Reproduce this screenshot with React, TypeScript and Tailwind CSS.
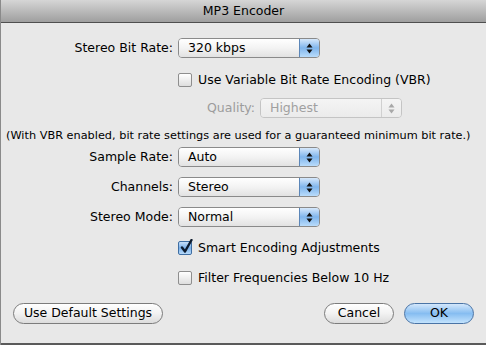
import React from "react";

const font = { fontFamily: '"DejaVu Sans", "Liberation Sans", sans-serif' };

function Arrows({ disabled }: { disabled?: boolean }) {
  const fill = disabled ? "#a8a8a8" : "#111";
  return (
    <svg width="7" height="11" viewBox="0 0 7 11">
      <polygon points="3.5,0.5 6.5,4.5 0.5,4.5" fill={fill} />
      <polygon points="3.5,10.5 6.5,6.5 0.5,6.5" fill={fill} />
    </svg>
  );
}

function Popup({ value, disabled }: { value: string; disabled?: boolean }) {
  return (
    <div
      className={`flex h-[20px] w-[142px] overflow-hidden rounded-[4px] border ${
        disabled ? "border-[#c4c4c4]" : "border-[#8a8a8a]"
      }`}
    >
      <div
        className={`flex flex-1 items-center pl-[9px] text-[12.5px] ${
          disabled
            ? "bg-gradient-to-b from-[#f4f4f4] to-[#ebebeb] text-[#a0a0a0]"
            : "bg-gradient-to-b from-[#ffffff] via-[#f3f3f3] to-[#e2e2e2] text-black"
        }`}
      >
        {value}
      </div>
      <div
        className={`flex w-[20px] items-center justify-center border-l ${
          disabled
            ? "border-[#d0d0d0] bg-gradient-to-b from-[#f4f4f4] to-[#ebebeb]"
            : "border-[#5b86b8] bg-gradient-to-b from-[#d6e8fb] via-[#7fb5ec] to-[#b9dcfb]"
        }`}
      >
        <Arrows disabled={disabled} />
      </div>
    </div>
  );
}

function Check({ checked, label }: { checked?: boolean; label: string }) {
  return (
    <div className="flex h-[20px] items-center pl-[177px]">
      <div
        className={`relative h-[14px] w-[14px] rounded-[2px] border ${
          checked
            ? "border-[#3e6ea3] bg-gradient-to-b from-[#c7dff8] via-[#79b0ea] to-[#b7dafa]"
            : "border-[#8e8e8e] bg-gradient-to-b from-[#ffffff] to-[#dedede]"
        }`}
      >
        {checked && (
          <svg className="absolute left-[1px] top-[-3px]" width="13" height="15" viewBox="0 0 13 15">
            <path d="M2 8.5 L5 12.5 L11.5 1" stroke="#0d1b2e" strokeWidth="2.4" fill="none" strokeLinecap="round" strokeLinejoin="round" />
          </svg>
        )}
      </div>
      <span className="ml-[6px] text-[12.5px] text-black">{label}</span>
    </div>
  );
}

function Row({ label, value, className = "" }: { label: string; value: string; className?: string }) {
  return (
    <div className={`flex h-[20px] items-center ${className}`}>
      <div className="w-[172px] text-right text-[12.5px] text-black">{label}</div>
      <div className="ml-[5px]">
        <Popup value={value} />
      </div>
    </div>
  );
}

function Button({ children, primary, className = "" }: { children: React.ReactNode; primary?: boolean; className?: string }) {
  return (
    <div
      className={`flex h-[21px] items-center justify-center rounded-full border text-[12.5px] text-black ${
        primary
          ? "border-[#4a74a6] bg-gradient-to-b from-[#d3e7fb] via-[#86bdf1] to-[#c3e3fd]"
          : "border-[#7c7c7c] bg-gradient-to-b from-[#ffffff] via-[#f2f2f2] to-[#dcdcdc]"
      } ${className}`}
    >
      {children}
    </div>
  );
}

export default function App() {
  return (
    <div className="flex h-[345px] w-[486px] flex-col overflow-hidden border-l border-[#8a8a8a] bg-[#e8e8e8]" style={font}>
      <div className="flex h-[23px] shrink-0 items-center justify-center border-b border-[#4f4f4f] bg-gradient-to-b from-[#d6d6d6] to-[#9f9f9f] text-[12.5px] text-black">
        MP3 Encoder
      </div>
      <div className="flex flex-1 flex-col border-b-2 border-[#5a5a5a]">
        <Row label="Stereo Bit Rate:" value="320 kbps" className="mt-[15px]" />
        <div className="mt-[12px]">
          <Check label="Use Variable Bit Rate Encoding (VBR)" />
        </div>
        <div className="mt-[8px] flex h-[20px] items-center">
          <div className="w-[254px] text-right text-[12.5px] text-[#9c9c9c]">Quality:</div>
          <div className="ml-[5px]">
            <Popup value="Highest" disabled />
          </div>
        </div>
        <div className="mt-[10px] flex h-[16px] items-center pl-[5px] text-[11.3px] text-black">
          (With VBR enabled, bit rate settings are used for a guaranteed minimum bit rate.)
        </div>
        <Row label="Sample Rate:" value="Auto" className="mt-[3px]" />
        <Row label="Channels:" value="Stereo" className="mt-[10px]" />
        <Row label="Stereo Mode:" value="Normal" className="mt-[10px]" />
        <div className="mt-[11px]">
          <Check checked label="Smart Encoding Adjustments" />
        </div>
        <div className="mt-[10px]">
          <Check label="Filter Frequencies Below 10 Hz" />
        </div>
        <div className="mt-[15px] flex items-center px-[12px]">
          <Button className="w-[150px]">Use Default Settings</Button>
          <div className="flex-1" />
          <Button className="w-[70px]">Cancel</Button>
          <Button primary className="ml-[10px] w-[70px]">
            OK
          </Button>
        </div>
      </div>
    </div>
  );
}
